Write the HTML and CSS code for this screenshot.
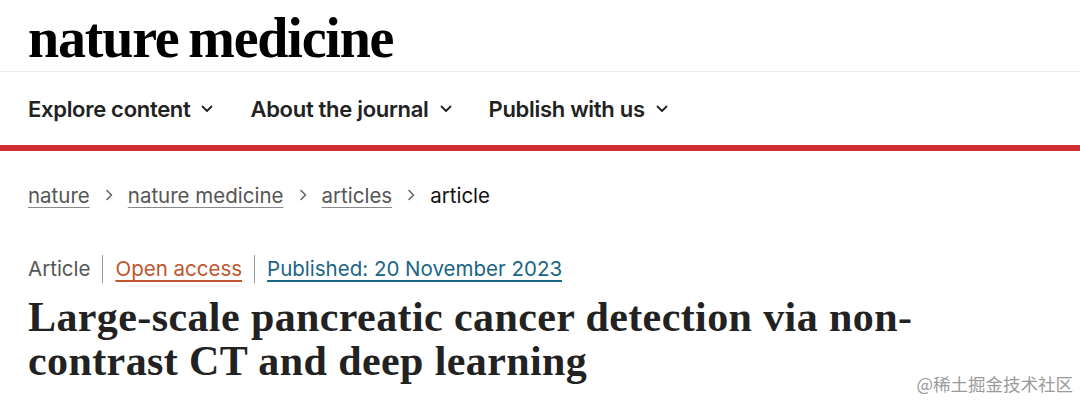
FILE: index.html
```html
<!DOCTYPE html>
<html lang="en">
<head>
<meta charset="utf-8">
<link rel="stylesheet" href="styles.css">
</head>
<body>
<header class="site-header">
  <div class="logo-bar">
    <div class="logo">nature medicine</div>
  </div>
  <nav class="main-nav">
    <a class="nav-item">Explore content <svg class="chev" viewBox="0 0 12 8"><path d="M1.5 1.5 6 6l4.5-4.5" fill="none" stroke="currentColor" stroke-width="1.8" stroke-linecap="round" stroke-linejoin="round"/></svg></a>
    <a class="nav-item">About the journal <svg class="chev" viewBox="0 0 12 8"><path d="M1.5 1.5 6 6l4.5-4.5" fill="none" stroke="currentColor" stroke-width="1.8" stroke-linecap="round" stroke-linejoin="round"/></svg></a>
    <a class="nav-item">Publish with us <svg class="chev" viewBox="0 0 12 8"><path d="M1.5 1.5 6 6l4.5-4.5" fill="none" stroke="currentColor" stroke-width="1.8" stroke-linecap="round" stroke-linejoin="round"/></svg></a>
  </nav>
  <div class="red-rule"></div>
</header>
<main class="content">
  <ol class="breadcrumbs">
    <li><a class="crumb-link">nature</a></li>
    <li class="sep"><svg viewBox="0 0 8 12"><path d="M2 1.5 6.5 6 2 10.5" fill="none" stroke="currentColor" stroke-width="1.6" stroke-linecap="round" stroke-linejoin="round"/></svg></li>
    <li><a class="crumb-link">nature medicine</a></li>
    <li class="sep"><svg viewBox="0 0 8 12"><path d="M2 1.5 6.5 6 2 10.5" fill="none" stroke="currentColor" stroke-width="1.6" stroke-linecap="round" stroke-linejoin="round"/></svg></li>
    <li><a class="crumb-link">articles</a></li>
    <li class="sep"><svg viewBox="0 0 8 12"><path d="M2 1.5 6.5 6 2 10.5" fill="none" stroke="currentColor" stroke-width="1.6" stroke-linecap="round" stroke-linejoin="round"/></svg></li>
    <li class="crumb-current">article</li>
  </ol>
  <ul class="meta">
    <li class="meta-type">Article</li>
    <li class="meta-oa"><a>Open access</a></li>
    <li class="meta-date"><a>Published: 20 November 2023</a></li>
  </ul>
  <h1 class="title">Large-scale pancreatic cancer detection via non-<br>contrast CT and deep learning</h1>
  <div class="watermark">@稀土掘金技术社区</div>
</main>
</body>
</html>
```

FILE: styles.css
```css
* { box-sizing: border-box; margin: 0; padding: 0; }
html, body { width: 1080px; height: 405px; overflow: hidden; background: #fff; }
body { font-family: Inter, "Liberation Sans", sans-serif; color: #222; position: relative; }

.logo-bar {
  height: 72px;
  padding: 12px 0 0 28px;
  border-bottom: 1px solid #ececec;
}
.logo {
  font-family: "Liberation Serif", "DejaVu Serif", serif;
  font-weight: 700;
  font-size: 56px;
  line-height: 52px;
  letter-spacing: -1.2px;
  word-spacing: -3px;
  color: #000;
}

.main-nav {
  display: flex;
  align-items: center;
  gap: 37px;
  height: 73px;
  padding: 0 0 0 28px;
}
.nav-item {
  display: flex;
  align-items: center;
  gap: 11px;
  font-size: 22px;
  font-weight: 600;
  letter-spacing: -0.3px;
  color: #222;
}
.chev { width: 12px; height: 8px; color: #222; }

.red-rule { height: 6px; background: #d12d35; }

.content { padding: 0 28px; }

.breadcrumbs {
  list-style: none;
  display: flex;
  align-items: center;
  gap: 15px;
  height: 86px;
  padding-top: 2px;
  font-size: 20.5px;
  color: #555;
}
.crumb-link { text-decoration: underline; text-decoration-color: #888; text-underline-offset: 4px; text-decoration-thickness: 1px; color: #555; }
.sep { display: flex; align-items: center; color: #666; }
.sep svg { width: 8px; height: 12px; }
.crumb-current { color: #111; }

.meta {
  list-style: none;
  display: flex;
  align-items: center;
  margin-top: 18px;
  font-size: 20.5px;
  line-height: 28px;
}
.meta li { padding: 0 12px; border-left: 1px solid #999; }
.meta li:first-child { padding-left: 0; border-left: 0; }
.meta-type { color: #555; }
.meta-oa a { color: #c0552e; text-decoration: underline; text-underline-offset: 4px; }
.meta-date a { color: #1b6584; text-decoration: underline; text-underline-offset: 4px; }

.title {
  margin-top: 12px;
  font-family: "Liberation Serif", "DejaVu Serif", serif;
  font-weight: 700;
  font-size: 42px;
  line-height: 44px;
  letter-spacing: 0.4px;
  color: #222;
}

.watermark {
  position: absolute;
  right: 7px;
  bottom: 9px;
  font-family: "Noto Sans CJK SC", sans-serif;
  font-size: 17.5px;
  color: #9a9a9a;
}
```
